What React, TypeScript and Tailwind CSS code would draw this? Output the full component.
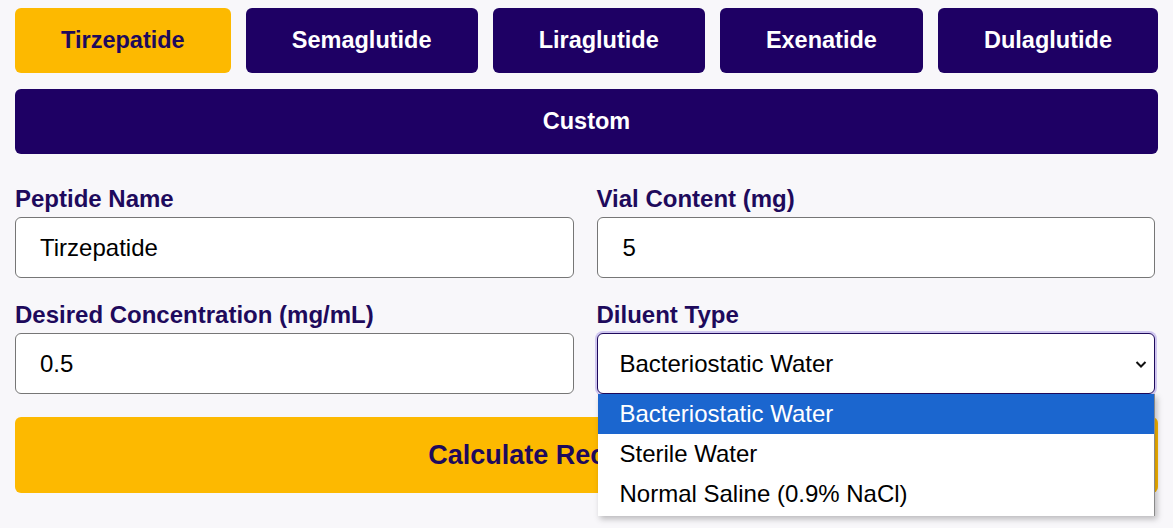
export default function App() {
  const peptides = ["Tirzepatide", "Semaglutide", "Liraglutide", "Exenatide", "Dulaglutide"]
  const diluents = ["Bacteriostatic Water", "Sterile Water", "Normal Saline (0.9% NaCl)"]

  return (
    <div className="min-h-[528px] bg-[#f8f7fa] px-[15px] pt-[8px] font-['Liberation_Sans',Arial,sans-serif]">
      {/* preset buttons */}
      <div className="flex gap-[15px]">
        {peptides.map((p, i) => (
          <button
            key={p}
            className={
              i === 0
                ? "h-[65px] flex-auto rounded-[6px] bg-[#fdb900] px-[42px] text-[23.5px] font-bold text-[#1e0a5c]"
                : "h-[65px] flex-auto rounded-[6px] bg-[#1e0064] px-[42px] text-[23.5px] font-bold text-white"
            }
          >
            {p}
          </button>
        ))}
      </div>
      <button className="mt-[16px] h-[65px] w-full rounded-[6px] bg-[#1e0064] text-[23.5px] font-bold text-white">
        Custom
      </button>

      {/* form */}
      <div className="mt-[31px] grid grid-cols-2 gap-x-[23px] gap-y-[23px] pr-[3px]">
        <div className="flex flex-col">
          <label className="text-[24px] font-bold leading-[27px] text-[#1e0a5c]">Peptide Name</label>
          <div className="mt-[5px] flex h-[61px] items-center rounded-[6px] border border-[#767676] bg-white px-[24px] text-[24px] text-black">
            Tirzepatide
          </div>
        </div>
        <div className="flex flex-col">
          <label className="text-[24px] font-bold leading-[27px] text-[#1e0a5c]">Vial Content (mg)</label>
          <div className="mt-[5px] flex h-[61px] items-center rounded-[6px] border border-[#767676] bg-white px-[25px] text-[24px] text-black">
            5
          </div>
        </div>
        <div className="flex flex-col">
          <label className="text-[24px] font-bold leading-[27px] text-[#1e0a5c]">Desired Concentration (mg/mL)</label>
          <div className="mt-[5px] flex h-[61px] items-center rounded-[6px] border border-[#767676] bg-white px-[24px] text-[24px] text-black">
            0.5
          </div>
        </div>
        <div className="relative flex flex-col">
          <label className="text-[24px] font-bold leading-[27px] text-[#1e0a5c]">Diluent Type</label>
          <div className="mt-[5px] flex h-[61px] items-center justify-between rounded-[6px] border border-[#1e0a5c] bg-white pl-[22px] pr-[6px] text-[24px] text-black shadow-[0_0_0_2px_#cfc6ef]">
            <span>Bacteriostatic Water</span>
            <svg width="14" height="14" viewBox="0 0 14 14" fill="none">
              <path d="M2.5 5l4.5 4.5L11.5 5" stroke="#111" strokeWidth="2" />
            </svg>
          </div>
          {/* open native list */}
          <div className="absolute left-[1px] right-0 top-[93px] z-10 border-r border-[#8a8a8a] bg-white pb-[2px] shadow-[2px_3px_6px_rgba(0,0,0,0.25)]">
            {diluents.map((d, i) => (
              <div
                key={d}
                className={
                  i === 0
                    ? "flex h-[40px] items-center bg-[#1b66cf] pl-[22px] text-[24px] text-white"
                    : "flex h-[40px] items-center pl-[22px] text-[24px] text-black"
                }
              >
                {d}
              </div>
            ))}
          </div>
        </div>
      </div>

      <button className="mt-[23px] h-[76px] w-full rounded-[6px] bg-[#fdb900] text-[27px] font-bold text-[#1e0a5c]">
        Calculate Reconstitution
      </button>
    </div>
  )
}
